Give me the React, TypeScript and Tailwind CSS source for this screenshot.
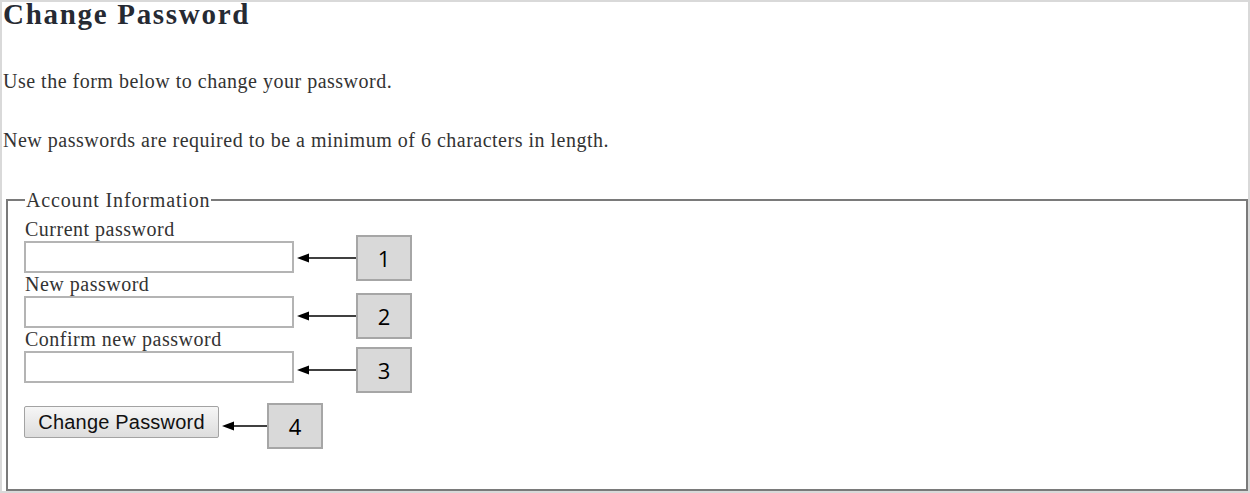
import React from 'react';

const serif = "font-['Liberation_Serif',serif]";

function Arrow({ width }: { width: number }) {
  return (
    <svg width={width} height="10" viewBox={`0 0 ${width} 10`} className="shrink-0">
      <polygon points="0,5 12,0.5 12,9.5" fill="#000" />
      <line x1="11" y1="5" x2={width} y2="5" stroke="#000" strokeWidth="1.3" />
    </svg>
  );
}

function Callout({ n, arrow, className }: { n: number; arrow: number; className: string }) {
  return (
    <div className={`ml-[3px] flex items-center ${className}`}>
      <Arrow width={arrow} />
      <div className="flex h-[46px] w-[56px] items-center justify-center border-2 border-[#a6a6a6] bg-[#d9d9d9] font-['Open_Sans',sans-serif] text-[22px] text-black">
        {n}
      </div>
    </div>
  );
}

function Field({ label, n, callout }: { label: string; n: number; callout: string }) {
  return (
    <div className="flex flex-col">
      <label className="pl-[1px] text-[20px] leading-[22px] tracking-[0.5px]">{label}</label>
      <div className="mt-[1px] flex items-start">
        <input type="password" className="h-[32px] w-[270px] border-2 border-[#b4b4b4] bg-white" />
        <Callout n={n} arrow={59} className={callout} />
      </div>
    </div>
  );
}

export default function App() {
  return (
    <div className={`flex h-[493px] w-full flex-col border-2 border-[#d9d9d9] bg-white text-[#333] ${serif}`}>
      <h1 className="pl-[1px] text-[29px] font-bold leading-[24px] tracking-[1.7px] text-[#262a33]">
        Change Password
      </h1>
      <p className="mt-[44px] pl-[1px] text-[20px] leading-[22px] tracking-[0.5px]">
        Use the form below to change your password.
      </p>
      <p className="mt-[37px] pl-[1px] text-[20px] leading-[22px] tracking-[0.5px]">
        New passwords are required to be a minimum of 6 characters in length.
      </p>
      <fieldset className="mt-[38px] ml-[4px] flex-1 border-2 border-[#7a7a7a] pl-4 pt-[7px]">
        <legend className="ml-[1px] px-[1px] text-[20px] leading-[22px] tracking-[0.85px]">Account Information</legend>
        <Field label="Current password" n={1} callout="-mt-[6px] -mb-[8px]" />
        <Field label="New password" n={2} callout="-mt-[3px] -mb-[11px]" />
        <Field label="Confirm new password" n={3} callout="-mt-[4px] -mb-[10px]" />
        <div className="mt-[23px] flex items-start">
          <button className="h-[32px] w-[195px] rounded-[2px] border border-[#a3a3a3] bg-gradient-to-b from-[#f6f6f6] to-[#dddddd] font-['Liberation_Sans',sans-serif] text-[20px] tracking-[0.2px] text-[#111]">
            Change Password
          </button>
          <Callout n={4} arrow={45} className="-mt-[3px] -mb-[10px]" />
        </div>
      </fieldset>
    </div>
  );
}
